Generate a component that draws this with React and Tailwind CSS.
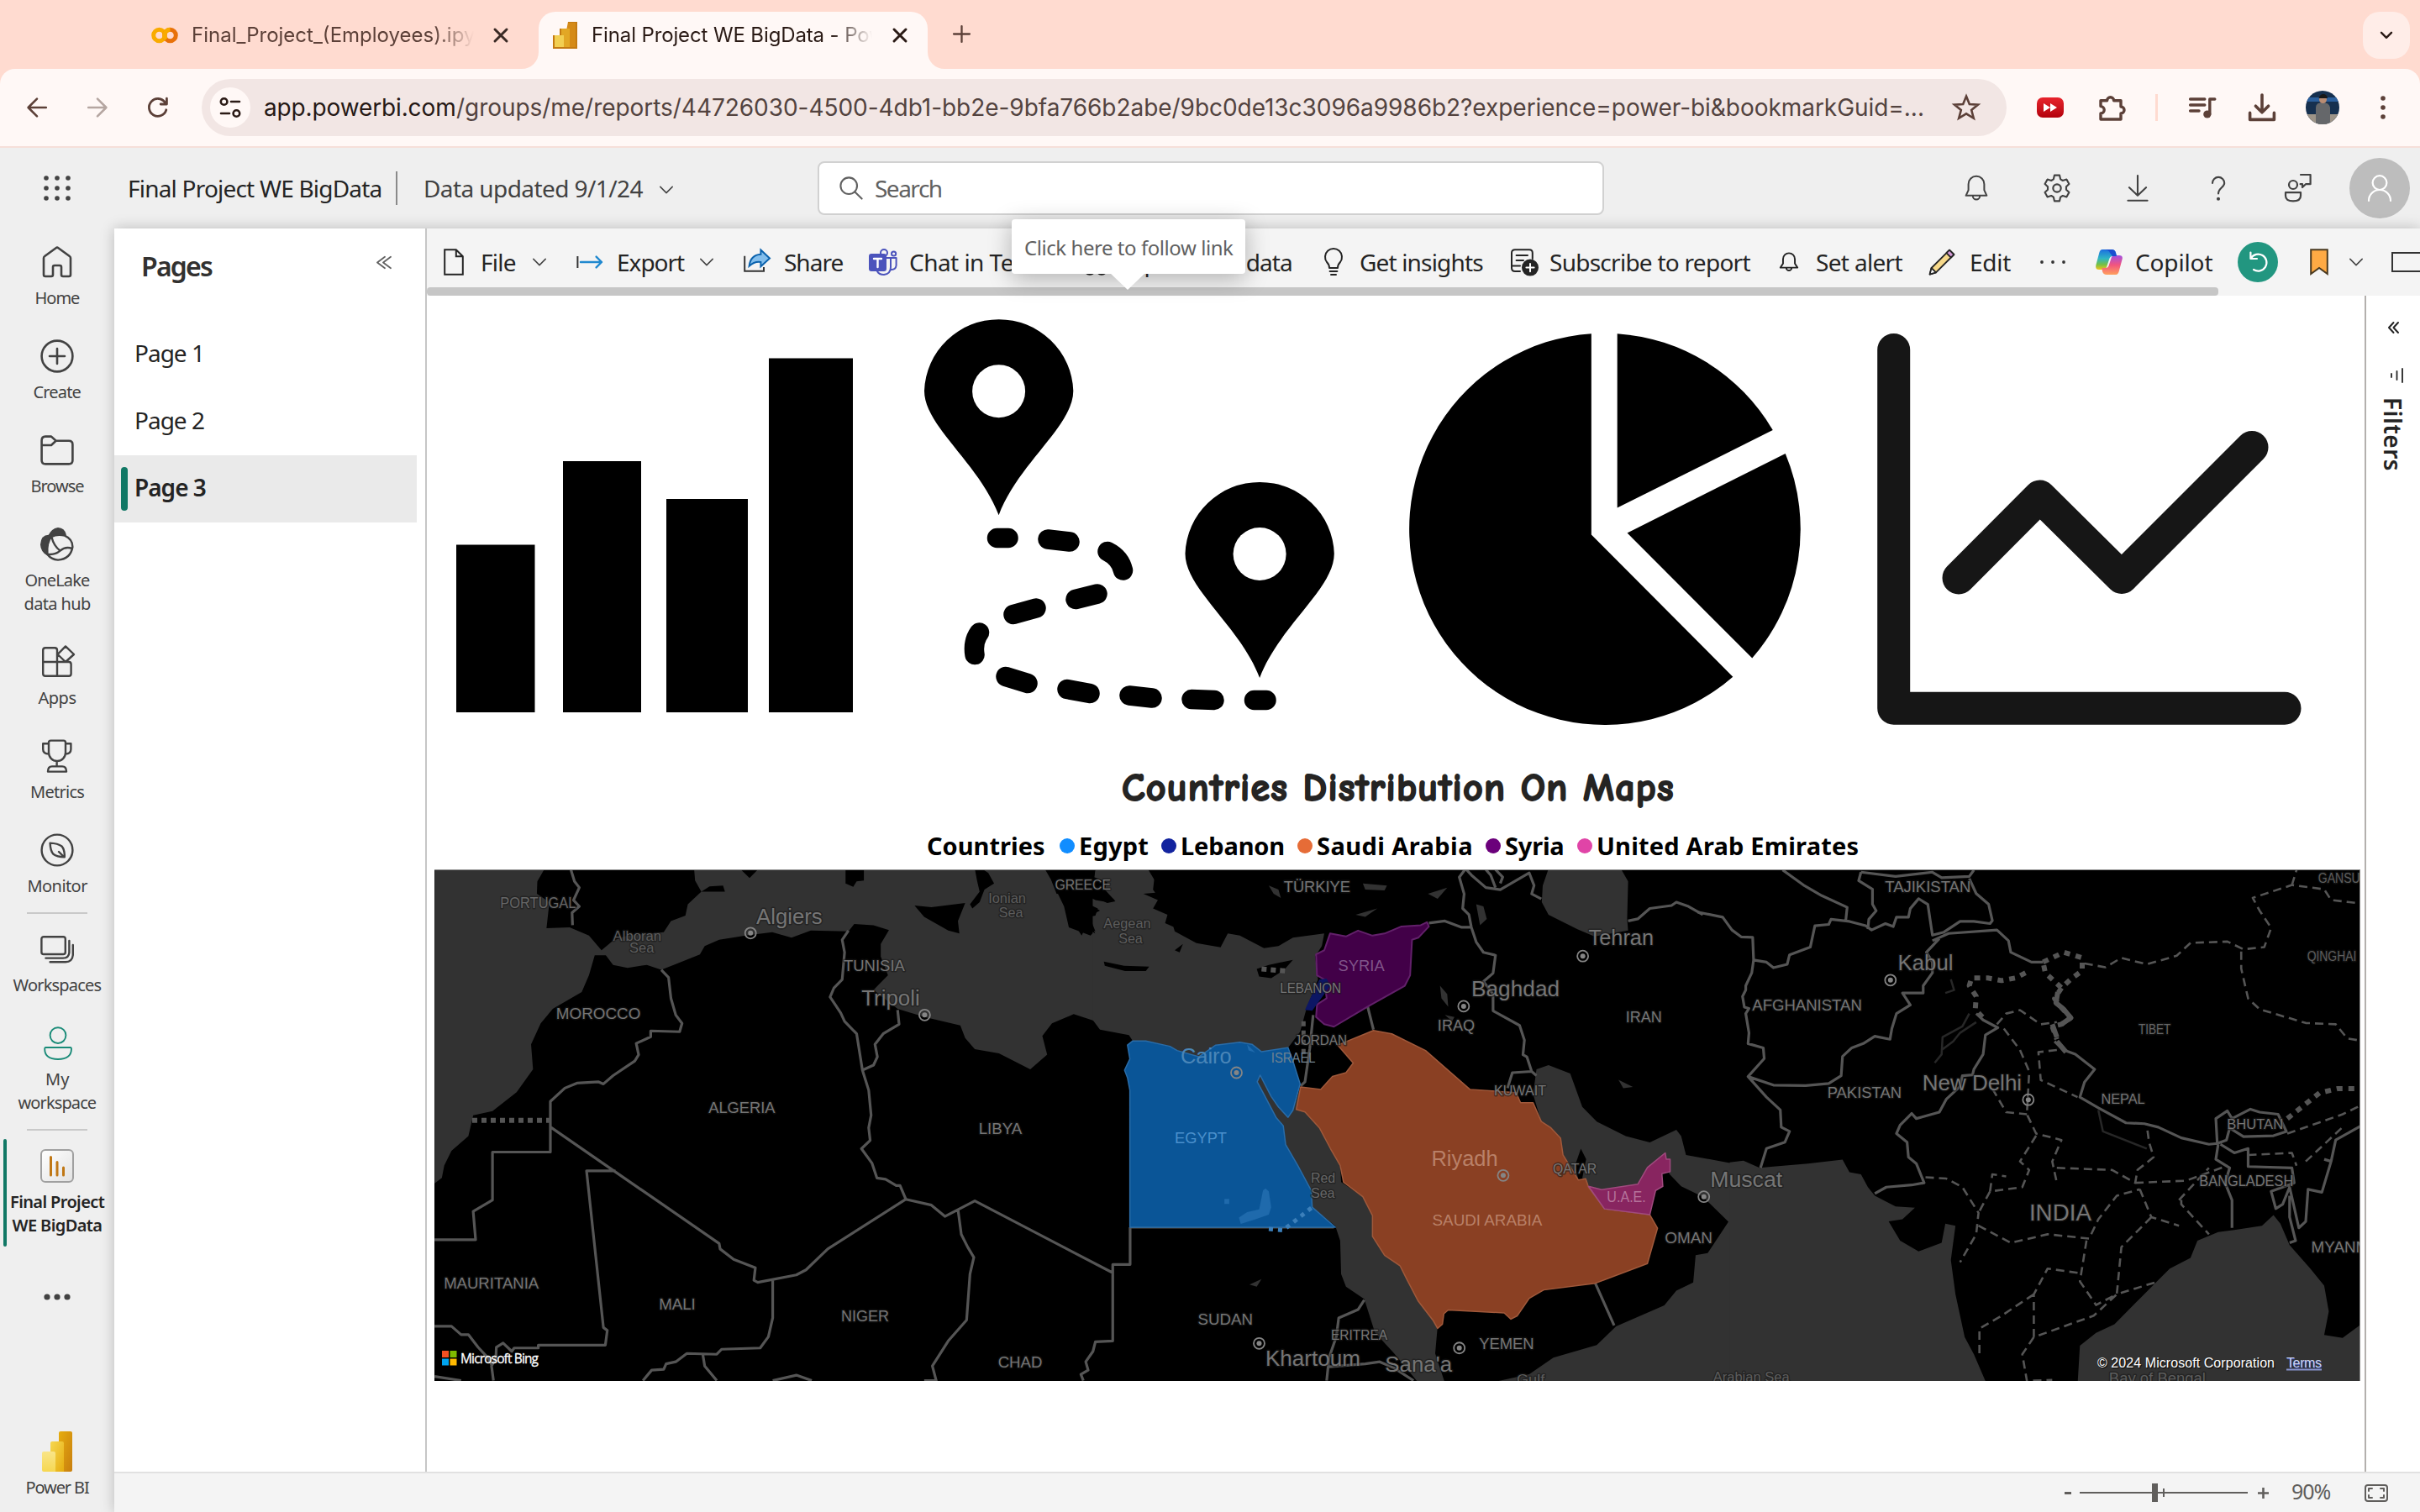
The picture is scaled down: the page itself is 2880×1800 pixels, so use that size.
import React, { useLayoutEffect, useRef } from "react";

/* Text spread to the width of its box through letter spacing. */
function Fit({ className = "", children }) {
  const outer = useRef(null);
  const inner = useRef(null);
  useLayoutEffect(() => {
    const o = outer.current.clientWidth;
    inner.current.style.letterSpacing = "0px";
    const n = inner.current.offsetWidth;
    const len = String(children).length;
    if (o && n) inner.current.style.letterSpacing = (o - n) / len + "px";
  }, [children]);
  return (
    <span ref={outer} className={"block shrink-0 whitespace-nowrap " + className}>
      <span ref={inner} className="inline-block">{children}</span>
    </span>
  );
}

function Svg({ className = "", vb = "0 0 20 20", sw = 1, children }) {
  return (
    <svg viewBox={vb} className={"block shrink-0 overflow-visible " + className} fill="none" stroke="currentColor" strokeWidth={sw} strokeLinecap="round" strokeLinejoin="round">
      {children}
    </svg>
  );
}

const Chevron = ({ className = "" }) => (
  <Svg className={"w-4 h-4 " + className} vb="0 0 8 8" sw={0.75}><path d="M.4 2.2 4 5.8 7.6 2.2" /></Svg>
);
const Close = ({ className = "" }) => (
  <Svg className={"w-[18px] h-[18px] " + className} vb="0 0 9 9" sw={1.5}><path d="M1 1 8 8M8 1 1 8" /></Svg>
);
const PowerBI = ({ className = "" }) => (
  <svg viewBox="0 0 36 48" className={"block shrink-0 " + className} preserveAspectRatio="none">
    <defs>
      <linearGradient id="pa" x1="0" y1="0" x2="1" y2="1"><stop stopColor="#e6ad10" /><stop offset="1" stopColor="#c87e0e" /></linearGradient>
      <linearGradient id="pb" x1="0" y1="0" x2="1" y2="1"><stop stopColor="#f6d751" /><stop offset="1" stopColor="#e6ad10" /></linearGradient>
      <linearGradient id="pc" x1="0" y1="0" x2="0" y2="1"><stop stopColor="#f9e589" /><stop offset="1" stopColor="#f6d751" /></linearGradient>
    </defs>
    <rect x="20" y="0" width="16" height="48" rx="2" fill="url(#pa)" />
    <path d="M10 14a2 2 0 0 1 2-2h12a2 2 0 0 1 2 2v34H10z" fill="url(#pb)" />
    <path d="M0 26a2 2 0 0 1 2-2h12a2 2 0 0 1 2 2v22H2a2 2 0 0 1-2-2z" fill="url(#pc)" />
  </svg>
);

function TabStrip() {
  return (
    <div className="flex h-[82px] bg-[#ffdbd0] font-['Inter','Liberation_Sans',sans-serif] text-[24px] text-[#5c4038] shrink-0">
      <div className="flex items-center w-[641px] pl-[180px] pt-[2px] shrink-0">
        <svg viewBox="0 0 32 20" className="w-8 h-5 shrink-0" fill="none" strokeWidth="5">
          <circle cx="9.5" cy="10" r="6.8" stroke="#f9ab00" /><circle cx="22.5" cy="10" r="6.8" stroke="#e8710a" />
          <path d="M22.5 3.2a6.8 6.8 0 0 0-4.8 11.6" stroke="#f9ab00" />
        </svg>
        <div className="ml-4 w-[336px] overflow-hidden [mask-image:linear-gradient(to_right,black_86%,transparent)]"><Fit className="w-[366px]">Final_Project_(Employees).ipynb</Fit></div>
        <Close className="ml-[23px] text-[#3a2a25]" />
      </div>
      <div className="relative w-[463px] mt-[14px] h-[68px] bg-[#fff8f6] rounded-t-[20px] flex items-center shrink-0 text-[#2a1a15]">
        <svg viewBox="0 0 20 20" className="absolute -left-5 bottom-0 w-5 h-5"><path d="M20 0V20H0A20 20 0 0 0 20 0" fill="#fff8f6" /></svg>
        <svg viewBox="0 0 20 20" className="absolute -right-5 bottom-0 w-5 h-5"><path d="M0 0V20H20A20 20 0 0 1 0 0" fill="#fff8f6" /></svg>
        <svg viewBox="0 0 29 32" className="ml-[17px] mb-[12px] w-[29px] h-8 shrink-0">
          <path d="M18 0H28V32H12z" fill="#d58a17" /><path d="M9 8H20V32H9z" fill="#e2a725" /><path d="M1 16H13V32H1z" fill="#f2cf52" /><path d="M18 0H28V32M9 8V16M1 16V31H27" stroke="#c47a12" strokeWidth="2" fill="none" />
        </svg>
        <div className="ml-[17px] -mt-[12px] w-[334px] overflow-hidden [mask-image:linear-gradient(to_right,black_86%,transparent)]"><Fit className="w-[372px]">Final Project WE BigData - Power</Fit></div>
        <Close className="ml-6 -mt-3" />
      </div>
      <Svg className="ml-[30px] mt-[30px] w-[21px] h-[21px] text-[#5c4038]" vb="0 0 10 10" sw={1.1}><path d="M5 .5V9.5M.5 5H9.5" /></Svg>
      <div className="ml-auto mr-3 mt-[14px] w-14 h-14 rounded-[20px] bg-[#ffede8] flex items-center justify-center text-[#2a1a15]">
        <Svg className="w-4 h-4" vb="0 0 8 8" sw={1.2}><path d="M1 2.4 4 5.4 7 2.4" /></Svg>
      </div>
    </div>
  );
}

function AddressBar() {
  return (
    <div className="bg-[#ffdbd0] shrink-0">
      <div className="h-[94px] flex items-center bg-[#fff8f6] rounded-t-[18px] border-b-2 border-[#f6dfd9] text-[#5c4038] font-['Inter','Liberation_Sans',sans-serif]">
        <Svg className="ml-8 w-6 h-6" vb="0 0 12 12" sw={1.3}><path d="M6 .8.8 6 6 11.2M1 6H11.4" /></Svg>
        <Svg className="ml-12 w-6 h-6 text-[#b5a6a1]" vb="0 0 12 12" sw={1.3}><path d="M6 .8 11.2 6 6 11.2M11 6H.6" /></Svg>
        <Svg className="ml-[48px] w-6 h-6" vb="0 0 12 12" sw={1.4}><path d="M10.9 7.4A5.2 5.2 0 1 1 10.2 3M11.2.6V4H7.6" /></Svg>
        <div className="ml-[40px] w-[2148px] h-[68px] rounded-full bg-[#f2e6e4] flex items-center shrink-0">
          <div className="ml-[10px] w-12 h-12 rounded-full bg-[#fff8f6] flex items-center justify-center text-[#2a1a15]">
            <Svg className="w-[26px] h-[26px]" vb="0 0 13 13" sw={1.3}><circle cx="2.8" cy="3" r="1.9" /><path d="M7 3H12M1 10H6" /><circle cx="10.2" cy="10" r="1.9" /></Svg>
          </div>
          <span className="ml-[16px] text-[28px] text-[#53433f]">
            <span className="flex"><Fit className="w-[229px] text-[#261915]">app.powerbi.com</Fit><Fit className="w-[1747px]">/groups/me/reports/44726030-4500-4db1-bb2e-9bfa766b2abe/9bc0de13c3096a9986b2?experience=power-bi&bookmarkGuid=...</Fit></span>
          </span>
          <Svg className="ml-[34px] w-[32px] h-[32px]" vb="0 0 16 16" sw={1.3}><path d="M8 1.3 9.9 6 15 6.3 11.1 9.5 12.4 14.4 8 11.7 3.6 14.4 4.9 9.5 1 6.3 6.1 6z" strokeLinejoin="miter" /></Svg>
        </div>
        <div className="ml-9 w-8 h-6 rounded-[7px] bg-gradient-to-b from-[#e8232c] to-[#b3000b] flex items-center justify-center">
          <svg viewBox="0 0 16 10" className="w-4 h-[10px]" fill="white"><path d="M0 0 8 5 0 10zM8 0 16 5 8 10z" /></svg>
        </div>
        <Svg className="ml-[40px] w-[34px] h-[34px]" vb="0 0 17 17" sw={1.7}><path d="M2 4.4H5.8A2 2 0 0 1 9.8 4.4H14V8A1.9 1.9 0 0 1 14 12V15.5H2V12A2 2 0 0 0 2 7.8z" /></Svg>
        <div className="ml-[35px] w-[3px] h-8 bg-[#ffdbd0]" />
        <Svg className="ml-[37px] w-8 h-8" vb="0 0 16 16" sw={1.7}><path d="M.8 3H9.4M.8 6.5H9.4M.8 10H6M12.4 12V3H15.4" /><circle cx="10.9" cy="12" r="2.3" fill="currentColor" stroke="none" /></Svg>
        <Svg className="ml-[39px] w-8 h-8" vb="0 0 16 16" sw={1.8}><path d="M8 .5V10.5M4.2 7.1 8 10.9 11.8 7.1M.8 11.2V15.200H15.200V11.2" /></Svg>
        <svg viewBox="0 0 40 40" className="ml-[36px] w-10 h-10 shrink-0">
          <clipPath id="me"><circle cx="20" cy="20" r="20" /></clipPath>
          <g clipPath="url(#me)"><path d="M0 0H40V40H0z" fill="#16304f" /><path d="M0 8H40V13H0z" fill="#2b5f9c" /><path d="M2 28H38V40H2z" fill="#9d9488" /><path d="M12 40V20Q12 14 20 14T29 20V40z" fill="#65676a" /><circle cx="20.500" cy="10.500" r="4.500" fill="#b98c73" /><path d="M15.500 9Q17 4 21 4T26 9z" fill="#181818" /></g>
        </svg>
        <svg viewBox="0 0 6 28" className="ml-[49px] w-[6px] h-7 shrink-0" fill="currentColor"><circle cx="3" cy="3" r="2.800" /><circle cx="3" cy="14" r="2.800" /><circle cx="3" cy="25" r="2.800" /></svg>
      </div>
    </div>
  );
}

function AppHeader() {
  return (
    <div className="h-24 bg-[#efefef] flex items-center shrink-0 text-[28px] text-[#242424]">
      <svg viewBox="0 0 32 32" className="ml-[52px] w-8 h-8 shrink-0" fill="#424242">
        {[4, 16, 28].map((y) => [3, 16, 29].map((x) => <circle key={x + "-" + y} cx={x} cy={y} r="2.800" />))}
      </svg>
      <Fit className="ml-[68px] w-[303px]">Final Project WE BigData</Fit>
      <div className="ml-[16px] w-[2px] h-10 bg-[#8a8a8a]" />
      <Fit className="ml-[31px] w-[261px] text-[#424242]">Data updated 9/1/24</Fit>
      <Chevron className="ml-5 mt-1 text-[#424242]" />
      <div className="ml-[172px] w-[936px] h-16 rounded-[8px] bg-white border-2 border-[#d1d1d1] flex items-center text-[#616161] shrink-0">
        <Svg className="ml-6 w-[28px] h-[28px]" vb="0 0 14 14" sw={1.05}><circle cx="5.600" cy="5.600" r="4.900" /><path d="M9.200 9.200 13.300 13.300" /></Svg>
        <Fit className="ml-[14px] w-[80px]">Search</Fit>
      </div>
      <div className="ml-auto flex items-center mr-3 text-[#424242]">
        <Svg className="w-8 h-8 mr-16" vb="0 0 16 16" sw={1}><path d="M8 .9A4.700 4.700 0 0 0 3.300 5.600V9.200L1.800 12.400H14.200L12.700 9.200V5.600A4.700 4.700 0 0 0 8 .9M5.900 12.600A2.100 2.100 0 0 0 10.100 12.600" /></Svg>
        <Svg className="w-9 h-9 mr-[62px] -ml-[2px]" vb="0 0 20 20" sw={1.2}><circle cx="10" cy="10" r="2.600" /><path d="M8.300 1.500h3.400l.6 2.600 1.500.9 2.500-.8 1.700 3-1.900 1.800v2l1.900 1.800-1.700 3-2.500-.8-1.500.9-.6 2.600H8.300l-.6-2.600-1.500-.9-2.500.8-1.700-3L3.900 11V9L2 7.200l1.700-3 2.500.8 1.500-.9z" /></Svg>
        <Svg className="w-8 h-8 mr-16" vb="0 0 16 16" sw={1.05}><path d="M8 .5V12.200M3 7.600 8 12.400 13 7.600M2.200 15.400H13.800" /></Svg>
        <Svg className="w-8 h-8 mr-16" vb="0 0 16 16" sw={1.05}><path d="M4.500 5A3.500 3.500 0 0 1 11.600 5C11.600 7.400 8 8 8 11.200" /><circle cx="8" cy="14.400" r=".5" fill="currentColor" /></Svg>
        <Svg className="w-9 h-9 mr-[44px] -ml-1" vb="0 0 18 18" sw={1.1}><circle cx="6.500" cy="7" r="2.500" /><path d="M2 11.600H11V13.500Q11 16.700 6.500 16.700T2 13.500zM11 1H16.800V6.600H14L12 8.500V6.600H10.800" /></Svg>
        <div className="w-[72px] h-[72px] rounded-full bg-[#bdbdbd] flex items-center justify-center text-white">
          <Svg className="w-8 h-8" vb="0 0 16 16" sw={1.100}><circle cx="8" cy="4.800" r="4.200" /><path d="M1.500 15.500A6.500 6.500 0 0 1 14.500 15.500" /></Svg>
        </div>
      </div>
    </div>
  );
}

function NavItem({ icon, lines, bold, mt = "mt-[35px]", bar }) {
  return (
    <div className={"relative flex flex-col items-center w-full shrink-0 " + mt}>
      {bar && <div className="absolute left-1 -top-3 w-1 h-[128px] rounded bg-[#117865]" />}
      <div className="h-10 w-10">{icon}</div>
      <div className={"mt-[9px] text-[20px] leading-[28px] flex flex-col items-center " + (bold ? "font-semibold text-[#242424]" : "text-[#424242]")}>
        {lines.map(([t, w]) => <Fit key={t} className={w}>{t}</Fit>)}
      </div>
    </div>
  );
}

function Sidebar() {
  const c = "w-10 h-10 text-[#424242]";
  return (
    <nav className="w-[136px] bg-[#efefef] flex flex-col items-center shrink-0">
      <NavItem mt="mt-5" lines={[["Home", "w-[53px]"]]} icon={<Svg className={c} sw={1.300}><path d="M2 7.600Q2 6.900 2.600 6.500L9.300 1.600Q10 1.100 10.700 1.600L17.400 6.500Q18 6.900 18 7.600V17.500Q18 18.500 17 18.500H13.500Q12.500 18.500 12.500 17.500V13Q12.500 12 11.500 12H8.500Q7.500 12 7.500 13V17.500Q7.500 18.500 6.500 18.500H3Q2 18.500 2 17.500z" /></Svg>} />
      <NavItem lines={[["Create", "w-[57px]"]]} icon={<Svg className={c} sw={1.300}><circle cx="10" cy="10" r="9.200" /><path d="M10 5.500V14.500M5.500 10H14.500" /></Svg>} />
      <NavItem lines={[["Browse", "w-[63px]"]]} icon={<Svg className={c} sw={1.300}><path d="M.8 4.200Q.8 1.800 3 1.800H6.500L9.300 4.400H17Q19.200 4.400 19.200 6.500V16Q19.200 18.200 17 18.200H3Q.8 18.200.8 16zM.8 7H6.500L9.300 4.400" /></Svg>} />
      <NavItem lines={[["OneLake", "w-[77px]"], ["data hub", "w-[79px]"]]} icon={
        <Svg className={c} sw={1.200}>
          <path d="M5 5.500Q7 1 10.500.6 14 .8 14.800 4.300L9.500 4.200zM4.800 5Q1 5 .6 10.200.8 14 4.200 16 3.600 9 6.600 5.400z" fill="currentColor" />
          <path d="M6.500 5.600Q10 3.700 14.500 4.800 19.300 7 19.200 11.500 18 18.800 10.500 19.300 6.500 19 4.200 16M6.700 5.600Q8 11 11.800 13.800M4 15.800Q8.500 16.600 11.800 13.800T19 12.600" />
        </Svg>} />
      <NavItem lines={[["Apps", "w-[45px]"]]} icon={<Svg className={c} sw={1.200}><path d="M1.600 3Q1.600 1.600 3 1.600H8.600Q10 1.600 10 3V18.400H3Q1.600 18.400 1.600 17zM1.600 10H17Q18.300 10 18.300 11.400V17Q18.300 18.400 17 18.400H10M15 .7 20 5.500 15 10 10.300 5.500z" /></Svg>} />
      <NavItem lines={[["Metrics", "w-[64px]"]]} icon={<Svg className={c} sw={1.200}><path d="M5 2Q5 .8 6.200.8H13.800Q15 .8 15 2V8A5 5 0 0 1 5 8zM5 2.600H1.600V6Q1.600 8.600 5 8.800M15 2.600H18.200V6Q18.200 8.600 15 8.800M9.800 13V16M4.500 19.300Q4.500 16.200 7 16.200H13Q15.500 16.200 15.500 19.300z" /></Svg>} />
      <NavItem lines={[["Monitor", "w-[71px]"]]} icon={<Svg className={c} sw={1.200}><circle cx="10" cy="10" r="9.200" /><path d="M5.800 5.800Q10.500 6 12.700 7.700 14.600 9.800 14.400 14.200 9.800 14 7.700 12.400 6 10.500 5.800 5.800M11 11 14 14" /></Svg>} />
      <div className="mt-[17px] w-[72px] h-[2px] bg-[#c9c9c9] shrink-0" />
      <NavItem mt="mt-[22px]" lines={[["Workspaces", "w-[105px]"]]} icon={<Svg className={c} sw={1.200}><rect x=".7" y="2.600" width="14.200" height="10.400" rx="1.300" /><path d="M17.200 5V12Q17 15.300 13.500 15.300H3.200M19.400 7.500V13.500Q19 17.600 15 17.600H5.800" /></Svg>} />
      <NavItem lines={[["My", "w-[28px]"], ["workspace", "w-[93px]"]]} icon={<Svg className="w-10 h-10 text-[#1a8b78]" sw={.95}><circle cx="10.500" cy="5.300" r="4.700" /><path d="M3.200 12.500H17.800Q18.500 12.500 18.500 13.500 18.300 19.400 10.500 19.500 2.700 19.400 2.600 13.500 2.600 12.500 3.200 12.500" /></Svg>} />
      <div className="mt-[17px] w-[72px] h-[2px] bg-[#c9c9c9] shrink-0" />
      <NavItem mt="mt-[22px]" bar bold lines={[["Final Project", "w-[112px]"], ["WE BigData", "w-[107px]"]]} icon={
        <svg viewBox="0 0 40 40" className="w-10 h-10"><defs><linearGradient id="rp" x1="0" y1="0" x2="1" y2="1"><stop stopColor="#fff" /><stop offset="1" stopColor="#e2e2e2" /></linearGradient></defs><rect x="1" y="1" width="38" height="38" rx="5" fill="url(#rp)" stroke="#a0a0a0" strokeWidth="2" /><path d="M12.500 9.500V31M20 15.500V31M27.500 22V31" stroke="#c07714" strokeWidth="3" strokeLinecap="round" /></svg>} />
      <svg viewBox="0 0 32 8" className="mt-[67px] w-8 h-2 shrink-0" fill="#424242"><circle cx="4" cy="4" r="3.600" /><circle cx="16" cy="4" r="3.600" /><circle cx="28" cy="4" r="3.600" /></svg>
      <PowerBI className="mt-auto w-9 h-12" />
      <Fit className="mt-[5px] mb-[15px] w-[75px] text-[20px] leading-[28px] text-[#424242]">Power BI</Fit>
    </nav>
  );
}

function PagesPane() {
  return (
    <aside className="w-[372px] bg-white border-r-2 border-[#c6c6c6] shrink-0 h-full">
      <div className="flex h-[110px]">
        <Fit className="ml-[32px] mt-[23px] w-[84px] text-[32px] leading-[44px] font-semibold text-[#323130]">Pages</Fit>
        <Svg className="ml-[196px] mt-[33px] w-[18px] h-[15px] text-[#616161]" vb="0 0 18 15" sw={1.800}><path d="M10 .8 1 7.500 10 14.200M17 .8 8 7.500 17 14.200" /></Svg>
      </div>
      {["Page 1", "Page 2", "Page 3"].map((p, i) => (
        <div key={p} className={"h-20 w-[360px] flex items-center text-[28px] text-[#242424] " + (i === 2 ? "bg-[#eaeaea] font-semibold" : "")}>
          <div className={"ml-2 w-2 h-[52px] rounded " + (i === 2 ? "bg-[#117865]" : "")} />
          <Fit className={"ml-[8px] -mt-[5px] " + (i === 2 ? "w-[85px]" : "w-[83px]")}>{p}</Fit>
        </div>
      ))}
    </aside>
  );
}

function ReportToolbar() {
  return (
    <div className="h-20 bg-[#f4f4f4] shrink-0 flex flex-col">
      <div className="h-[70px] pt-[10px] flex items-center overflow-hidden text-[28px] text-[#242424] leading-[60px]">
        <Svg className="ml-5 w-6 h-8" vb="0 0 12 16" sw={1}><path d="M.6.6H7.400L11.400 4.600V15.400H.6zM7.400.6V4.600H11.400" strokeLinejoin="miter" /></Svg>
        <Fit className="ml-[20px] w-[42px]">File</Fit><Chevron className="ml-[20px] text-[#424242]" />
        <Svg className="ml-9 w-8 h-8 text-[#2189cf]" vb="0 0 16 16" sw={1.200}><path d="M.7 4.500V11.500" stroke="#333" strokeWidth="1" strokeLinecap="butt" /><path d="M2.500 8H15M11.800 4.800 15 8 11.800 11.200" /></Svg>
        <Fit className="ml-[16px] w-[80px]">Export</Fit><Chevron className="ml-[19px] text-[#424242]" />
        <Svg className="ml-9 w-8 h-8 text-[#333]" vb="0 0 16 16" sw={1}><path d="M.6 4.400V13.400H12V11" strokeLinejoin="miter" strokeLinecap="butt" /><path d="M10.200.8 15.500 5.800 10.200 10.600V8Q6.500 7.400 3.300 10.400 4 3.800 10.200 3.400z" fill="#83beec" stroke="#0a62ad" strokeLinejoin="miter" /></Svg>
        <Fit className="ml-4 w-[70px]">Share</Fit>
        <Svg className="ml-[31px] w-[34px] h-8 text-[#4b53bc]" vb="0 0 17 16" sw={1}><circle cx="9" cy="2.500" r="2" /><circle cx="14.800" cy="3" r="1.300" /><path d="M11 5.500H16.300V10Q16 12.500 13.500 12.500M5 13.500Q6 15.500 9 15.500 13 15 13 11V5.500H10" /><rect x=".5" y="3.500" width="9.500" height="9.500" rx="1" fill="#4b53bc" /><path d="M3 6H7.500M5.250 6V11" stroke="white" strokeWidth="1.200" /></Svg>
        <Fit className="ml-[14px] w-[178px]">Chat in Teams</Fit>
        <Svg className="ml-[28px] w-8 h-8" vb="0 0 16 16" sw={1}><circle cx="4.500" cy="12.300" r="3.100" /><circle cx="11.500" cy="12.300" r="3.100" /><path d="M2 9 4 2H6L8 9 10 2H12L14 9" /></Svg>
        <Fit className="ml-[13px] w-[205px]">Explore this data</Fit>
        <Svg className="ml-[37px] w-6 h-8" vb="0 0 12 16" sw={1}><path d="M3.500 11.500Q3.500 9.500 2 8A5 5 0 1 1 10 8Q8.500 9.500 8.500 11.500zM3.800 13.500H8.200M4.500 15.500H7.500" /></Svg>
        <Fit className="ml-[19px] w-[147px]">Get insights</Fit>
        <Svg className="ml-[32px] w-[34px] h-8" vb="0 0 17 16" sw={1}><path d="M6 13.500H3Q1 13.500 1 11.500V2.500Q1 .6 3 .6H11.500Q13.400.6 13.400 2.500V6M3.800 4H10.500M3.800 7H8M1 10.200H6" /><circle cx="12" cy="11.300" r="4.500" fill="#242424" /><path d="M12 9V13.600M9.700 11.300H14.300" stroke="white" /></Svg>
        <Fit className="ml-[13px] w-[239px]">Subscribe to report</Fit>
        <Svg className="ml-[34px] w-6 h-6" vb="0 0 16 16" sw={1.300}><path d="M8 .9A4.700 4.700 0 0 0 3.300 5.600V9.200L1.200 12.400H14.800L12.700 9.200V5.600A4.700 4.700 0 0 0 8 .9M5.900 12.600A2.100 2.100 0 0 0 10.100 12.600" /></Svg>
        <Fit className="ml-[20px] w-[103px]">Set alert</Fit>
        <Svg className="ml-[31px] w-8 h-8" vb="0 0 16 16" sw={.9}><path d="M12.500.8 15.200 3.500 4.500 14.200.8 15.300 1.800 11.500z" fill="#f7d98a" /><path d="M12.500.8 15.200 3.500 13.400 5.300 10.700 2.600z" fill="#d59bd8" /><path d="M1.800 11.500 4.500 14.200.8 15.300z" fill="white" /></Svg>
        <Fit className="ml-[17px] w-[49px]">Edit</Fit>
        <svg viewBox="0 0 30 4" className="ml-[35px] w-[30px] h-1 shrink-0" fill="#333"><circle cx="2" cy="2" r="1.900" /><circle cx="15" cy="2" r="1.900" /><circle cx="28" cy="2" r="1.900" /></svg>
        <svg viewBox="0 0 32 30" className="ml-[36px] w-8 h-[30px] shrink-0">
          <defs>
            <linearGradient id="ca" x1="0" y1="0" x2="0" y2="1"><stop stopColor="#1c6fe0" /><stop offset=".45" stopColor="#2fb6c4" /><stop offset=".75" stopColor="#76c043" /><stop offset="1" stopColor="#f3c31c" /></linearGradient>
            <linearGradient id="cb" x1="0" y1="0" x2="0" y2="1"><stop stopColor="#a34fe0" /><stop offset=".5" stopColor="#f2557e" /><stop offset="1" stopColor="#ffa05c" /></linearGradient>
          </defs>
          <path d="M8 0H19Q23 0 24 4L25 8H20Q17 8 16 12L13 21Q12 24 8 24H4Q-1 24 .5 18L4 5Q5 0 8 0" fill="url(#ca)" />
          <path d="M24 30H13Q9 30 8 26L7.500 22H12Q15 22 16 18L19 9Q20 7 24 7H28Q33 7 31.500 12L28 25Q27 30 24 30" fill="url(#cb)" />
          <path d="M8 0H19Q23 0 24 4L25 8H20L17 4Q16 0 8 0" fill="#1a4fd0" />
        </svg>
        <Fit className="ml-[15px] w-[92px]">Copilot</Fit>
        <div className="ml-[30px] w-12 h-12 rounded-full bg-[#229680] flex items-center justify-center text-white shrink-0">
          <Svg className="w-[26px] h-[26px]" vb="0 0 13 13" sw={1.100}><path d="M2.200.8V4.500H6M2.400 4.300A5 5 0 1 1 4 11" /></Svg>
        </div>
        <Svg className="ml-[38px] w-[22px] h-8" vb="0 0 11 16" sw={1}><path d="M.6.6H10.400V15L5.500 11.500.6 15z" fill="#ffaa44" stroke="#4a3a20" strokeLinejoin="miter" /></Svg>
        <Chevron className="ml-[25px] text-[#424242]" />
        <div className="ml-[34px] w-[60px] h-6 border-2 border-[#333] shrink-0" />
      </div>
      <div className="h-[10px]"><div className="w-[2132px] h-full rounded-[4px] bg-[#c6c6c6]" /></div>
    </div>
  );
}

const Pin = ({ x = 0, y = 0 }) => (
  <g transform={`translate(${x} ${y})`}>
    <path d="M1188.600 614C1165 552 1100 508 1100 466A88.700 88 0 0 1 1277.300 466C1277.300 508 1212 552 1188.600 614z" />
    <circle cx="1188.600" cy="466.500" r="31.500" fill="white" />
  </g>
);

function Pictograms() {
  return (
    <div className="flex h-[548px] shrink-0 pl-[32px]">
      <svg viewBox="540 352 480 548" className="w-[480px] h-[548px] shrink-0">
        <rect x="543" y="648.500" width="93.500" height="199.500" /><rect x="670" y="549" width="93" height="299" /><rect x="793" y="594" width="97" height="254" /><rect x="915" y="426.500" width="100" height="421.500" />
      </svg>
      <svg viewBox="1090 352 500 548" className="ml-[70px] w-[500px] h-[548px] shrink-0">
        <Pin y={-.8} /><Pin x={310.500} y={193} />
        <path d="M1186.500 640.500H1200M1247 642 1273 645M1318 656.500Q1333 664 1336.500 679M1280 713.500 1306 707M1206 731.500 1233 724M1165.500 753Q1157.500 764 1160 779.500M1197 805.500 1223 813.500M1270 820.500 1297 825.500M1344 828 1371 831M1418 832.500 1445 833.500M1492.500 833.500H1507" stroke="black" strokeWidth="23.500" strokeLinecap="round" fill="none" />
      </svg>
      <svg viewBox="1670 352 480 548" className="ml-[80px] w-[480px] h-[548px] shrink-0">
        <g transform="translate(1640 340) scale(.7908 .3571)">
          <path d="M321 160V830L534 1304A294 653 0 1 1 321 160z" /><path d="M360 160A294 653 0 0 1 594 482L360 741z" /><path d="M613 560A294 653 0 0 1 563 1242L375 825z" />
        </g>
      </svg>
      <svg viewBox="2230 352 520 548" className="ml-[80px] w-[520px] h-[548px] shrink-0" fill="none" stroke="#161616" strokeWidth="39" strokeLinecap="round" strokeLinejoin="round">
        <path d="M2253.700 416.500V843.200H2719" /><path d="M2331 688 2427.600 591 2525 687.500 2680 532.500" />
      </svg>
    </div>
  );
}

/* Map tiles: origin and scale of each tile on the page. */
const WEST = { x: 500, y: 890, sx: 0.574, sy: 0.4974 };
const MID = { x: 1200, y: 890, sx: 0.574, sy: 0.4974 };
const EAST = { x: 2020, y: 1000, sx: 0.5485, sy: 0.5102 };

const Tile = ({ t, children }) => <g transform={`translate(${t.x} ${t.y}) scale(${t.sx} ${t.sy})`}>{children}</g>;

/* [text, left, right, baseline, font size] */
const LABELS = [
  [WEST, [
    ["PORTUGAL", 166, 323, 385, 18, "#666"], ["Alboran", 400, 500, 462, 17, "#5c5c5c"], ["Sea", 434, 485, 490, 17, "#5c5c5c"], ["Algiers", 697, 834, 422, 26],
    ["TUNISIA", 878, 1005, 534, 19], ["Tripoli", 915, 1036, 618, 26], ["MOROCCO", 282, 457, 649, 19], ["ALGERIA", 598, 736, 874, 19], ["LIBYA", 1158, 1248, 925, 19],
    ["MAURITANIA", 49, 246, 1295, 19], ["MALI", 495, 571, 1345, 19], ["NIGER", 873, 972, 1374, 19], ["CHAD", 1198, 1290, 1483, 19],
    ["GREECE", 1316, 1432, 340, 17], ["Ionian", 1178, 1256, 371, 17, "#5c5c5c"], ["Sea", 1200, 1250, 407, 17, "#5c5c5c"], ["Aegean", 1417, 1515, 432, 17, "#5c5c5c"], ["Sea", 1448, 1498, 468, 17, "#5c5c5c"],
  ]],
  [MID, [
    ["TÜRKIYE", 571, 709, 346, 19], ["LEBANON", 563, 690, 588, 17], ["JORDAN", 593, 702, 711, 17], ["ISRAEL", 545, 637, 754, 17, "#6f8290"],
    ["SYRIA", 684, 780, 534, 19, "#80558a"], ["IRAQ", 890, 967, 678, 19], ["Baghdad", 960, 1143, 596, 26], ["Tehran", 1203, 1338, 472, 26], ["IRAN", 1280, 1355, 657, 19],
    ["Cairo", 357, 463, 755, 26, "#4a86b8"], ["EGYPT", 345, 453, 947, 19, "#4a90cc"], ["Riyadh", 877, 1015, 1002, 26, "#b98068"], ["SAUDI ARABIA", 879, 1107, 1143, 19, "#b98068"],
    ["KUWAIT", 1007, 1115, 832, 17], ["QATAR", 1129, 1220, 1020, 17], ["U.A.E.", 1241, 1322, 1087, 19, "#b5739b"], ["Muscat", 1455, 1605, 1051, 26], ["OMAN", 1361, 1460, 1186, 19],
    ["Red", 627, 678, 1041, 17, "#666"], ["Sea", 627, 677, 1077, 17, "#666"], ["SUDAN", 393, 507, 1381, 19], ["ERITREA", 669, 786, 1418, 17], ["YEMEN", 976, 1090, 1439, 19],
    ["Khartoum", 533, 730, 1480, 26], ["Sana'a", 781, 920, 1494, 26], ["Gulf", 1054, 1112, 1523, 17, "#5c5c5c"],
  ]],
  [EAST, [
    ["TAJIKISTAN", 407, 593, 122, 19], ["GANSU", 1347, 1438, 100, 16, "#5e5e5e"], ["QINGHAI", 1323, 1430, 283, 16, "#5e5e5e"], ["TIBET", 957, 1027, 453, 16, "#666"], ["Kabul", 435, 555, 303, 26],
    ["AFGHANISTAN", 119, 357, 397, 19], ["PAKISTAN", 282, 443, 601, 19], ["New Delhi", 488, 704, 585, 26], ["NEPAL", 876, 971, 616, 17], ["BHUTAN", 1149, 1271, 674, 17],
    ["BANGLADESH", 1089, 1293, 808, 18], ["INDIA", 720, 855, 888, 28], ["MYANMAR", 1332, 1505, 962, 19], ["Arabian Sea", 34, 200, 1265, 17, "#5c5c5c"], ["Bay of Bengal", 893, 1103, 1268, 18, "#5c5c5c"],
  ]],
];
const CITIES = [[WEST, [[685, 444], [1046, 640]]], [MID, [[473, 778], [944, 619], [1191, 499], [1026, 1024], [1442, 1075], [520, 1426], [935, 1437]]], [EAST, [[419, 327], [718, 606]]]];

const SEA = "#323232";
const EGYPT = "M258 702 285 702 335 715 350 725 395 740 430 712 480 705 505 710 525 728 580 718 590 750 605 805 590 868 580 885 560 860 545 835 522 784 516 800 530 830 555 885 570 905 575 950 600 1000 628 1060 630 1100 678 1148H252V820L247 790 241 772 252 745 247 712z";
const SAUDI = "M606 812 648 818 672 787 700 778 715 755 683 712 757 677 795 685 865 725 957 818 1053 826 1062 850 1088 850 1105 895 1125 910 1145 935 1150 975 1182 1035 1197 1032 1203 1052 1236 1104 1330 1118 1346 1150 1325 1235 1217 1282 1110 1298 1080 1318 1055 1360 1042 1368 1028 1353 912 1346 903 1355 900 1380 890 1390 880 1370 850 1325 825 1270 812 1240 780 1215 755 1170 755 1120 735 1075 695 1040 688 1000 668 960 645 910 615 872 597 866z";
const SYRIA = "M667 445 700 452 725 438 755 450 780 445 815 428 855 425 868 418 872 428 850 455 837 460 833 545 822 570 745 620 675 668 655 662 638 645 640 615 660 600 655 555 640 545 638 495 655 485z";

function MapView() {
  return (
    <svg viewBox="517 1035 2292 609" className="w-[2292px] h-[609px] block shrink-0 [&_path]:[vector-effect:non-scaling-stroke]" strokeLinejoin="round">
      <rect x="517" y="1035" width="2292" height="609" fill="black" />
      <g fill={SEA}>
        <Tile t={WEST}>
          <path d="M30 290H258L243 320 242 350 268 370 262 432 310 430 350 450 376 485 400 462 430 450 505 442 520 415 550 402 555 375 583 345 570 318 568 290H1150L1155 320 1160 345 1140 375 1145 385 1160 370 1170 340 1190 325 1178 300 1165 290H1295L1310 320 1335 380 1345 430 1390 450 1405 430 1400 290V655L1355 638 1310 660 1290 690 1300 735 1265 770 1200 732 1150 722 1130 695 1120 665 1046 645 990 625 940 580 970 545 955 500 955 470 972 437 940 425 900 422 888 440 810 438 770 455 730 442 675 450 620 460 590 475 580 495 530 518 500 532 470 520 430 527 400 520 385 497H362L350 545 335 585 275 625 250 660 230 710 234 770 200 825 150 870 110 880 100 930 65 965 50 1000 45 1030 30 1043z" />
        </Tile>
        <Tile t={MID}>
          <path d="M175 290H305L300 340 335 400 345 440 390 468 440 478 455 445 480 450 530 480 560 475 590 455 655 445 650 475 636 500 642 555 618 625 605 680 580 718 525 728 505 710 480 705 430 712 395 740 350 725 335 715 285 702H258L250 688 190 675 175 652z" />
          <path d="M1120 290H1270L1285 320 1283 410 1285 438 1215 452 1180 435 1120 400 1106 370 1108 330z" />
          <path d="M520 782 516 800 530 830 555 885 570 905 575 950 600 1000 628 1060 630 1100 678 1145 688 1180 690 1260 700 1290 738 1320 760 1400 800 1450 850 1520H905L885 1450 890 1385 850 1325 812 1240 780 1215 755 1170 755 1120 735 1075 690 1040 688 1000 645 910 615 872 597 866 606 810 590 868 580 885 545 835z" />
          <path d="M1095 770 1120 760 1165 780 1190 860 1220 895 1280 930 1330 945 1385 915 1395 930 1405 975 1505 996V1520H1000L1080 1500 1130 1460 1220 1430 1260 1385 1300 1365 1360 1335 1385 1300 1420 1280 1425 1215 1450 1210 1493 1135 1440 1075 1395 1050 1370 1020 1362 970 1305 1045 1230 1058 1205 1050 1190 1030 1198 985 1187 960 1175 1000 1182 1035 1150 975 1145 935 1105 895 1088 830z" />
          <path d="M540 330 560 340 565 360 550 350zM735 325 785 330 780 342 740 340zM870 350 910 335 890 362zM970 375 985 380 992 410 978 425zM895 570 910 590 912 620 898 600zM905 640 925 645 920 655zM720 400 765 385 740 405zM500 1285 525 1272 515 1290zM1265 795 1295 812 1275 815z" />
        </Tile>
        <Tile t={EAST}>
          <path d="M70 752 100 748 135 765 165 762 240 755 315 746 330 775 355 780 370 810 385 830 430 855 472 858 445 885 415 890 440 935 480 960 530 940 538 895 560 900 550 980 560 1060 580 1160 600 1200 628 1270H70z" />
          <path d="M825 1270 830 1180 865 1150 905 1130 960 1070 1025 1000 1070 975 1085 935 1130 915 1165 910 1225 900 1250 875 1265 895 1285 945 1330 1000 1360 1040 1370 1100 1360 1155 1400 1162 1440 1130V1270z" />
        </Tile>
      </g>
      <g fill="black">
        <Tile t={WEST}>
          <path d="M882 290H920V318L905 320 898 333 882 325zM665 292H700L683 312zM1025 378 1060 382 1130 372 1115 415 1118 445 1095 438 1045 405zM600 332 628 330 632 345H583z" />
          <path d="M1305 292H1400L1395 330 1420 345 1440 365 1425 370 1400 365 1375 350 1330 345zM1340 375 1380 372 1405 385 1400 402 1388 405 1400 440 1380 430 1370 445 1350 410z" />
        </Tile>
        <Tile t={MID}>
          <path d="M85 292H180L178 310 205 322 200 340 222 368 205 372 180 358 100 350 90 320zM120 375 160 370 190 390 165 405 180 445 160 430 152 450 130 410zM198 512 240 522 292 524 285 535 242 535 200 522zM515 530 540 520 590 508 572 532 545 552 520 548zM290 292 310 330 330 345 280 350 310 365 300 385 330 400 325 420 345 430 380 292zM345 485 362 470 355 490z" />
        </Tile>
      </g>

      <g fill="none" stroke="#555" strokeWidth="3.200">
        <Tile t={WEST}>
          <path d="M312 290 320 320 330 335 318 365 330 380 315 395 316 425M500 532 515 550 520 600 530 640 543 660 538 680 478 678V692L448 708 453 735 445 750 400 785 380 805 370 800 325 803 300 815 270 847V968H150V1083L110 1110 115 1178H30M270 908 620 1187 622 1200 650 1225 695 1245 692 1275 700 1280 780 1262 800 1250 845 1200 1007 1081 995 1048 987 1048 965 1033 947 1030 937 995 915 960 933 940 930 910 935 880 930 820 917 772 905 685 880 655 872 635 850 597 858 575 875 555 880 490 875 460 888 438M405 1013H345L380 1388 388 1395 384 1430H245V1437L195 1437 190 1445 172 1425 158 1435 157 1460 148 1480 152 1515M30 1385 65 1385 85 1405H100L120 1435 140 1460 150 1480M30 1505 85 1515M917 772 940 760 948 740 943 710 960 685 993 662 990 628" />
          <path d="M731 1275V1365L722 1410 705 1437 625 1440 615 1452 553 1450 530 1470 510 1475 505 1488 480 1490 462 1515M586 1452 590 1480 615 1515M731 1515 780 1502 812 1515M1007 1081 1060 1095 1088 1122 1150 1085 1436 1257M1115 1105 1122 1165 1135 1195 1148 1220 1140 1260 1133 1370 1095 1420 1062 1480 1070 1515 1045 1515M1472 1148V1237H1436V1420L1400 1422 1395 1445 1380 1470 1385 1490 1370 1500 1375 1515" />
          <path d="M108 892H268" strokeDasharray="6 5" strokeWidth="6" />
        </Tile>
        <Tile t={MID}>
          <path d="M872 420 905 415 940 430 960 430 970 465 985 490 1010 497 1005 540 985 560 1005 590 1005 630 1060 665 1070 700 1067 735 1075 740 1085 775 1095 785M1085 775 1045 778 1035 815M948 290 935 310 945 350 942 385 955 400 960 430M948 290 960 305 990 335 1020 340 1080 300 1090 330 1085 350 1105 362M990 292 1000 305 1010 335M1010 292 1025 310 1020 325M745 620 757 675M632 640 625 720 615 800 606 810M1285 415 1305 410 1330 385 1375 378 1385 370 1410 380 1440 400M252 1148H675M1217 1282 1256 1383M738 1322 725 1345 685 1365 680 1410 665 1460 660 1515M665 1482 740 1475 770 1470 800 1485 840 1515" />
          <path d="M612 655V740" strokeDasharray="6 5" strokeWidth="5" />
          <path d="M525 530 580 535" strokeDasharray="6 5" strokeWidth="6" />
        </Tile>
        <Tile t={EAST}>
          <path d="M0 168 55 180 75 210 95 226 120 227 122 280 118 310 105 340 105 350 98 365 102 390 112 393 105 405 112 450 110 475 143 485 145 510 110 552 150 600 180 630 182 670 200 680 190 705 150 720 137 765M122 280 150 285 165 298 195 290 200 268 245 250 255 200 285 197 290 185 330 190 365 200 378 210 408 195 425 202 432 180 458 180 462 160 480 137 500 150 510 222 535 215 570 190 600 190 635 195 640 188 632 150 605 125 590 90M185 70 230 105 270 130 325 157 322 188M355 75 350 95 380 115 380 150 388 165 372 185 370 208M355 75 430 85 510 75 530 88 590 85 600 70M510 235 545 218 650 210 675 235 680 262 725 285 750 285M525 230 497 262 510 285 510 310 490 340 490 357 445 357 462 385 432 405 422 440 418 465 385 458 360 475 335 485 315 505 312 550 285 568 235 573 165 572 110 552" />
          <path d="M605 405 620 420 652 438 625 455 620 500 600 535 597 548 575 550 570 575 540 605 525 635 475 650 465 638 440 665 432 685 455 705 458 740 475 755 492 800 465 805 410 810 385 825M775 470 795 490 820 500 862 535 840 565 830 600 870 625 930 660 970 662 1000 670 1050 695 1110 710 1128 708 1125 650 1150 632 1160 650 1200 628 1220 635 1260 640 1278 680 1250 690 1185 692 1155 672 1148 700 1128 708M1130 710 1125 745 1155 765 1145 800 1160 840 1160 905M1135 710 1165 730 1195 720V762L1290 765 1295 800 1245 820 1255 860 1270 850 1285 810 1305 905 1320 890 1325 815 1355 822 1375 750 1360 745M1375 750 1385 700 1438 668M1285 830 1285 880 1298 935 1285 940" />
          <path d="M515 520 530 500 532 460 575 435 590 405M530 490 555 470 570 450 605 425M870 630 880 680 975 720M550 325 557 350 538 357" stroke="#272727" strokeWidth="2.500" />
          <path d="M712 310 690 322 660 328 630 322 595 322 590 340 605 365 603 395 620 415M750 285 795 262 835 275 835 305 810 325 790 345 755 310 750 285M1280 650 1350 590 1390 580 1438 580M790 345 775 370 785 385 810 415 790 430 770 435 780 465" strokeDasharray="7 7" strokeWidth="6" />
          <path d="M782 355 778 380 795 395 810 415 790 430M770 430 780 460M780 470 800 495" strokeWidth="6" />
          <path d="M840 288 885 297 920 275 975 290 1040 270 1070 240 1150 237 1185 255 1230 250 1245 205 1220 165 1205 135 1290 105 1360 115 1375 140 1438 148M1290 105 1300 70M1180 260V300L1195 370 1220 395 1320 427 1385 430 1410 463 1438 468M665 440 700 490 720 540 715 640 735 685 790 700 770 750 780 800M650 430 670 405 700 397 745 430 780 425M780 490 740 495 745 560 825 600M640 580 670 635 715 640M735 690 700 750 720 770 705 810 635 820 640 780 670 785M495 787 540 790 575 810 610 870 605 920 570 985M610 900 680 940 760 920 850 930 870 885 910 830 960 815M635 820 610 870M780 765 900 770 950 800 955 770 990 740 980 705 975 665M950 800 1060 795 1150 760M960 815 985 880 1045 900M1045 840 1110 765M1050 840 1050 850 1110 920M985 880 920 950 910 1060 865 1085 830 1030 845 930M825 1010 760 1000 730 1060V1160L860 1110 910 1060 1000 1030M730 1060 660 1110 612 1140V1200M730 1160 705 1200 715 1262 770 1260M1280 685 1400 640 1438 620M1195 735 1290 730 1300 760M1320 750 1370 700 1400 670" strokeDasharray="10 6" strokeWidth="2.600" />
        </Tile>
      </g>

      <Tile t={MID}>
        <path d={EGYPT} fill="#0a5597" stroke="#2a6ca8" strokeWidth="1.500" />
        <path d="M528 1060 533 1055 540 1062 545 1100 540 1118 510 1130 482 1140 478 1125 495 1112 520 1105zM448 1080H458V1092H448zM495 710 512 730 498 725z" fill="#1f6aac" />
        <path d="M540 1152 570 1155 630 1100" fill="none" stroke="#3b7fba" strokeWidth="5" strokeDasharray="5 6" />
        <path d={SAUDI} fill="#8a4023" stroke="#a0593b" strokeWidth="1.500" />
        <path d={SYRIA} fill="#420048" stroke="#62206a" strokeWidth="2" />
        <path d="M645 555 660 553 667 570 655 590 630 630 615 628 630 590z" fill="#0c1664" />
        <path d="M1203 1050 1230 1058 1305 1045 1325 1005 1362 970 1364 985 1372 985 1372 1015 1355 1020 1357 1050 1342 1060 1330 1118 1236 1104z" fill="#882560" stroke="#a04a7e" strokeWidth="1.500" />
      </Tile>

      {LABELS.map(([t, rows]) => rows.map(([s, a, b, y, size, c]) => (
        <text key={s + a} x={t.x + a * t.sx} y={t.y + y * t.sy} textLength={(b - a) * t.sx} lengthAdjust="spacingAndGlyphs" fontSize={size} fill={c || "#757575"} stroke={c && c.charCodeAt(1) !== c.charCodeAt(2) && c.length > 4 && c !== "#5c5c5c" && c !== "#5e5e5e" ? "none" : "rgba(25,25,25,.55)"} strokeWidth="3" paintOrder="stroke" fontFamily="'Liberation Sans', Arial, sans-serif">{s}</text>
      )))}
      {CITIES.map(([t, pts]) => pts.map(([x, y]) => (
        <g key={x} transform={`translate(${t.x + x * t.sx} ${t.y + y * t.sy})`}><circle r="6.500" fill="none" stroke="#858585" strokeWidth="1.800" /><circle r="3" fill="#858585" /></g>
      )))}

      <g>
        <path d="M526 1608H534V1616H526z" fill="#f25022" /><path d="M535.500 1608H543.500V1616H535.500z" fill="#7fba00" /><path d="M526 1617.500H534V1625.500H526z" fill="#00a4ef" /><path d="M535.500 1617.500H543.500V1625.500H535.500z" fill="#ffb900" />
        <text x="548" y="1623" textLength="93" fontSize="15.500" fill="white" stroke="white" strokeWidth=".3" fontFamily="'Open Sans','Noto Sans',sans-serif">Microsoft Bing</text>
        <text x="2496" y="1628" textLength="211" fontSize="16" fill="white" fontFamily="'Liberation Sans',sans-serif" className="[text-shadow:1px_1px_1px_black]">© 2024 Microsoft Corporation</text>
        <text x="2721" y="1628" textLength="42" fontSize="16" fill="#cfd6ee" fontFamily="'Liberation Sans',sans-serif" className="[text-shadow:1px_1px_0_#2742a8]">Terms</text>
        <path d="M2721 1630.500H2763" stroke="#8894cf" strokeWidth="2" />
      </g>
      <path d="M517 1035.500H2809M2808.500 1035V1644" stroke="#8a8a8a" fill="none" />
    </svg>
  );
}

const LEGEND = [
  ["Egypt", "bg-[#118dff]", "w-[83px]"],
  ["Lebanon", "bg-[#12239e]", "w-[124px]"],
  ["Saudi Arabia", "bg-[#e66c37]", "w-[186px]"],
  ["Syria", "bg-[#6b007b]", "w-[71px]"],
  ["United Arab Emirates", "bg-[#e044a7]", "w-[312px]"],
];

function Report() {
  return (
    <main className="w-[2306px] bg-white flex flex-col shrink-0 overflow-hidden">
      <Pictograms />
      <div className="h-[78px] flex items-center pl-[827px] shrink-0">
        <h1 className="font-['Comic_Sans_MS','Comic_Neue','Open_Sans',sans-serif] font-bold text-[46px] leading-[60px] text-[#252423] [-webkit-text-stroke:1.800px_#252423]"><Fit className="w-[658px]">Countries Distribution On Maps</Fit></h1>
      </div>
      <div className="h-[57px] flex items-center pl-[595px] text-[29px] font-bold text-black leading-[40px] shrink-0">
        <Fit className="w-[141px]">Countries</Fit>
        {LEGEND.map(([n, c, w], i) => (
          <div key={n} className={"flex items-center " + (i ? "ml-[14px]" : "ml-[17px]")}>
            <div className={"w-[18px] h-[18px] rounded-full " + c} />
            <Fit className={"ml-[5px] mr-[1px] " + w}>{n}</Fit>
          </div>
        ))}
      </div>
      <div className="pl-[9px]"><MapView /></div>
    </main>
  );
}

export default function App() {
  return (
    <div className="w-[2880px] h-[1800px] overflow-hidden flex flex-col font-['Noto_Sans','Open_Sans',sans-serif] bg-white">
      <TabStrip />
      <AddressBar />
      <AppHeader />
      <div className="flex flex-1 min-h-0">
        <Sidebar />
        <div className="relative w-[2744px] flex flex-col shadow-[0_0_16px_rgba(0,0,0,0.22)]">
          <div className="flex flex-1 min-h-0">
            <PagesPane />
            <div className="w-[2372px] flex flex-col shrink-0 overflow-hidden">
              <ReportToolbar />
              <div className="flex flex-1 min-h-0">
                <Report />
                <div className="w-[66px] border-l-2 border-[#b3b0ad] bg-white flex flex-col items-center text-[#242424] shrink-0">
                  <Svg className="mt-[31px] w-[13px] h-[14px]" vb="0 0 13 14" sw={2}><path d="M6.500 1 1 7 6.500 13M12 1 6.500 7 12 13" /></Svg>
                  <Svg className="mt-[41px] ml-[7px] w-4 h-[18px]" vb="0 0 16 18" sw={1.800}><path d="M15 1V17M8.500 4V14M2 7V11" /></Svg>
                  <div className="mt-[17px] -ml-[1px] h-[92px] text-[28px] leading-[38px] font-semibold tracking-[0.500px] [writing-mode:vertical-rl]">Filters</div>
                </div>
              </div>
            </div>
          </div>
          <div className="h-12 bg-[#f4f4f4] border-t-2 border-[#e1e1e1] flex items-center text-[#605e5c] shrink-0">
            <div className="ml-[2321px] w-2 h-[3px] bg-[#605e5c]" />
            <div className="ml-[10px] w-[200px] h-6 flex items-center relative">
              <div className="w-full h-[2px] bg-[#605e5c]" />
              <div className="absolute left-[86px] top-[1px] w-[7px] h-[22px] bg-[#605e5c]" />
              <div className="absolute left-[99px] top-[7px] w-[2px] h-[10px] bg-[#605e5c]" />
            </div>
            <Svg className="ml-[11px] w-[15px] h-[15px]" vb="0 0 15 15" sw={2.600}><path d="M7.500 1V14M1 7.500H14" strokeLinecap="butt" /></Svg>
            <Fit className="ml-[26px] -mt-[2px] w-[46px] text-[25px]">90%</Fit>
            <Svg className="ml-[41px] w-[28px] h-[21px]" vb="0 0 28 21" sw={2}><rect x="1" y="1" width="26" height="19" rx="3" /><path d="M5 8V5H9M19 5H23V8M23 13V16H19M9 16H5V13" /></Svg>
          </div>
          <div className="absolute left-[1068px] -top-[11px] w-[278px] h-[65px] rounded-[4px] bg-white shadow-[0_6px_28px_rgba(0,0,0,0.28)] flex items-center justify-center text-[24px] text-[#616161] pt-[2px]">
            <Fit className="w-[248px]">Click here to follow link</Fit>
            <svg viewBox="0 0 42 20" className="absolute left-[117px] top-[64px] w-[42px] h-5"><path d="M0 0H42L21 20z" fill="white" /></svg>
          </div>
        </div>
      </div>
    </div>
  );
}
